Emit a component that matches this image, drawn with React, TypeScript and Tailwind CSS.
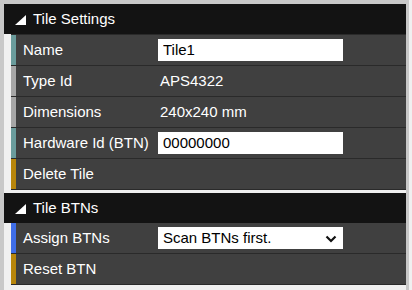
import React from "react";

type Row = {
  label: string;
  accent: string;
  kind: "input" | "text" | "select" | "none";
  value?: string;
};

const section1: Row[] = [
  { label: "Name", accent: "bg-[#6a9c9c]", kind: "input", value: "Tile1" },
  { label: "Type Id", accent: "bg-[#a6a6a6]", kind: "text", value: "APS4322" },
  { label: "Dimensions", accent: "bg-[#a6a6a6]", kind: "text", value: "240x240 mm" },
  { label: "Hardware Id (BTN)", accent: "bg-[#6a9c9c]", kind: "input", value: "00000000" },
  { label: "Delete Tile", accent: "bg-[#b8860b]", kind: "none" },
];

const section2: Row[] = [
  { label: "Assign BTNs", accent: "bg-[#3f6ee8]", kind: "select", value: "Scan BTNs first." },
  { label: "Reset BTN", accent: "bg-[#b8860b]", kind: "none" },
];

function Header({ title }: { title: string }) {
  return (
    <div className="h-[30px] bg-[#131313] flex items-center text-[15px] text-white">
      <svg width="11" height="10" viewBox="0 0 11 10" className="ml-[11px] mr-[7px] mt-[1px]">
        <polygon points="11,0 11,10 0,10" fill="#ffffff" />
      </svg>
      <span>{title}</span>
    </div>
  );
}

function RowView({ row, first }: { row: Row; first?: boolean }) {
  return (
    <div
      className={`ml-[7px] flex bg-[#404040] border-b border-[#2a2a2a] ${
        first ? "h-[32px] border-t" : "h-[31px]"
      }`}
    >
      <div className={`w-[5px] ${row.accent}`} />
      <div className="w-[142px] pl-[7px] flex items-center text-[15px] text-white whitespace-nowrap">
        {row.label}
      </div>
      <div className="flex-1 flex items-center">
        {row.kind === "input" && (
          <input
            readOnly
            value={row.value}
            className="w-[185px] h-[22px] bg-white text-black text-[15px] px-[5px] outline-none border-0"
          />
        )}
        {row.kind === "text" && (
          <span className="pl-[2px] text-[15px] text-white">{row.value}</span>
        )}
        {row.kind === "select" && (
          <div className="relative w-[185px] h-[22px] bg-white flex items-center">
            <span className="pl-[5px] text-[15px] text-black">{row.value}</span>
            <svg
              width="12"
              height="8"
              viewBox="0 0 12 8"
              className="absolute right-[6px] top-[8px]"
            >
              <polyline
                points="1.5,1.5 6,6 10.5,1.5"
                fill="none"
                stroke="#111"
                strokeWidth="2.2"
              />
            </svg>
          </div>
        )}
      </div>
    </div>
  );
}

export default function App() {
  return (
    <div
      className="w-[412px] h-[290px] bg-[#f0f0f0] overflow-hidden"
      style={{ fontFamily: '"Liberation Sans", Arial, sans-serif' }}
    >
      <div className="w-[409px] h-[290px] border-l-4 border-t-4 border-r-[3px] border-[#c8c8c8] flex flex-col">
        <Header title="Tile Settings" />
        {section1.map((r, i) => (
          <RowView key={r.label} row={r} first={i === 0} />
        ))}
        <div className="h-[3px]" />
        <Header title="Tile BTNs" />
        {section2.map((r) => (
          <RowView key={r.label} row={r} />
        ))}
      </div>
    </div>
  );
}
